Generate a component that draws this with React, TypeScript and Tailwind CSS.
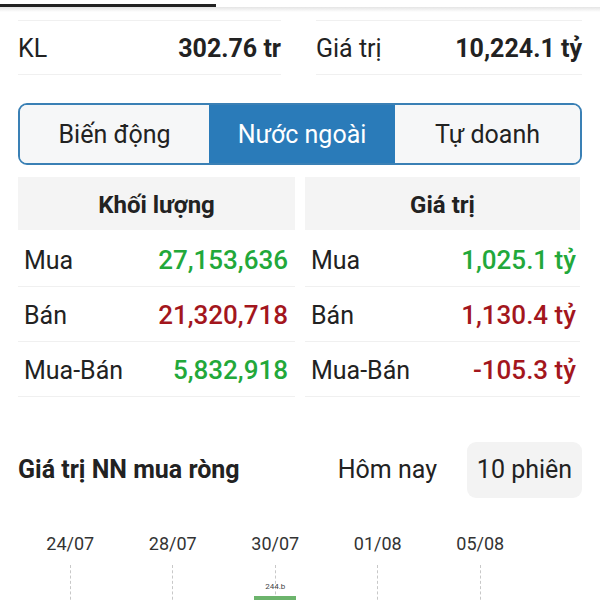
const stats = [
  { label: "Mua", vol: "27,153,636", val: "1,025.1 tỷ", volUp: true, valUp: true },
  { label: "Bán", vol: "21,320,718", val: "1,130.4 tỷ", volUp: false, valUp: false },
  { label: "Mua-Bán", vol: "5,832,918", val: "-105.3 tỷ", volUp: true, valUp: false },
];

const dates = ["24/07", "28/07", "30/07", "01/08", "05/08"];

export default function App() {
  return (
    <main className="relative h-[600px] w-[600px] overflow-hidden bg-white text-[#222] [font-family:Roboto,'Noto_Sans',sans-serif]">
      <div className="h-[4px]" />
      <div className="h-[3px] w-[216px] bg-[#222]" />
      <div className="h-[5px] bg-gradient-to-b from-[#e4e4e4] to-white" />

      <div className="mt-[8px] flex px-[18px]">
        <div className="flex h-[55px] w-[263px] items-center justify-between border-y border-[#f0f0f0] pt-[3px]">
          <span className="text-[25px]">KL</span>
          <span className="text-[25px] font-bold">302.76 tr</span>
        </div>
        <div className="ml-[35px] flex h-[55px] flex-1 items-center justify-between border-y border-[#f0f0f0] pt-[3px]">
          <span className="text-[25px]">Giá trị</span>
          <span className="text-[25px] font-bold">10,224.1 tỷ</span>
        </div>
      </div>

      <div className="mx-[18px] mt-[28px] flex h-[62px] overflow-hidden rounded-[9px] border-2 border-[#3a80b5] pt-[2px] text-[25px]">
        <div className="-mt-[2px] flex w-[189px] items-center justify-center bg-[#f6f7f8] pt-[2px]">Biến động</div>
        <div className="-mt-[2px] flex w-[186px] items-center justify-center bg-[#2a7bb9] pt-[2px] text-white">Nước ngoài</div>
        <div className="-mt-[2px] flex flex-1 items-center justify-center bg-[#f6f7f8] pt-[2px]">Tự doanh</div>
      </div>

      <div className="mt-[12px] grid grid-cols-[277px_275px] gap-x-[10px] px-[18px]">
        <div className="mb-[2px] flex h-[53px] items-center justify-center bg-[#f4f4f4] pt-[2px] text-[24px] font-bold">Khối lượng</div>
        <div className="mb-[2px] flex h-[53px] items-center justify-center bg-[#f4f4f4] pt-[2px] text-[24px] font-bold">Giá trị</div>
        {stats.map((s) => (
          <div key={s.label} className="contents">
            <div className="flex h-[55px] items-center justify-between border-b border-[#f0f0f0] pl-[6px] pr-[7px] pt-[3px]">
              <span className="text-[25px]">{s.label}</span>
              <span className={`text-[26px] font-medium ${s.volUp ? "text-[#22a83a]" : "text-[#a3161d]"}`}>{s.vol}</span>
            </div>
            <div className="flex h-[55px] items-center justify-between border-b border-[#f0f0f0] pl-[6px] pr-[4px] pt-[3px]">
              <span className="text-[25px]">{s.label}</span>
              <span className={`text-[26px] font-medium ${s.valUp ? "text-[#22a83a]" : "text-[#a3161d]"}`}>{s.val}</span>
            </div>
          </div>
        ))}
      </div>

      <div className="mt-[45px] flex items-center px-[18px]">
        <h2 className="flex-1 text-[25px] font-bold">Giá trị NN mua ròng</h2>
        <span className="mr-[30px] text-[25px]">Hôm nay</span>
        <span className="flex h-[56px] w-[115px] items-center justify-center rounded-[9px] bg-[#f3f3f3] text-[25px]">10 phiên</span>
      </div>

      <div className="mt-[32px] flex pl-[19px]">
        {dates.map((d, i) => (
          <div key={d} className="flex w-[102.5px] flex-col items-center">
            <span className="text-[18px] text-[#333]">{d}</span>
            <div className="mt-[8px] h-[40px] border-l border-dashed border-[#c8c8c8]" />
            {i === 2 && (
              <div className="absolute bottom-0 flex flex-col items-center">
                <span className="mb-[3px] text-[8px] text-[#444]">244.b</span>
                <div className="h-[4px] w-[42px] bg-[#6cb46c]" />
              </div>
            )}
          </div>
        ))}
      </div>
    </main>
  );
}
